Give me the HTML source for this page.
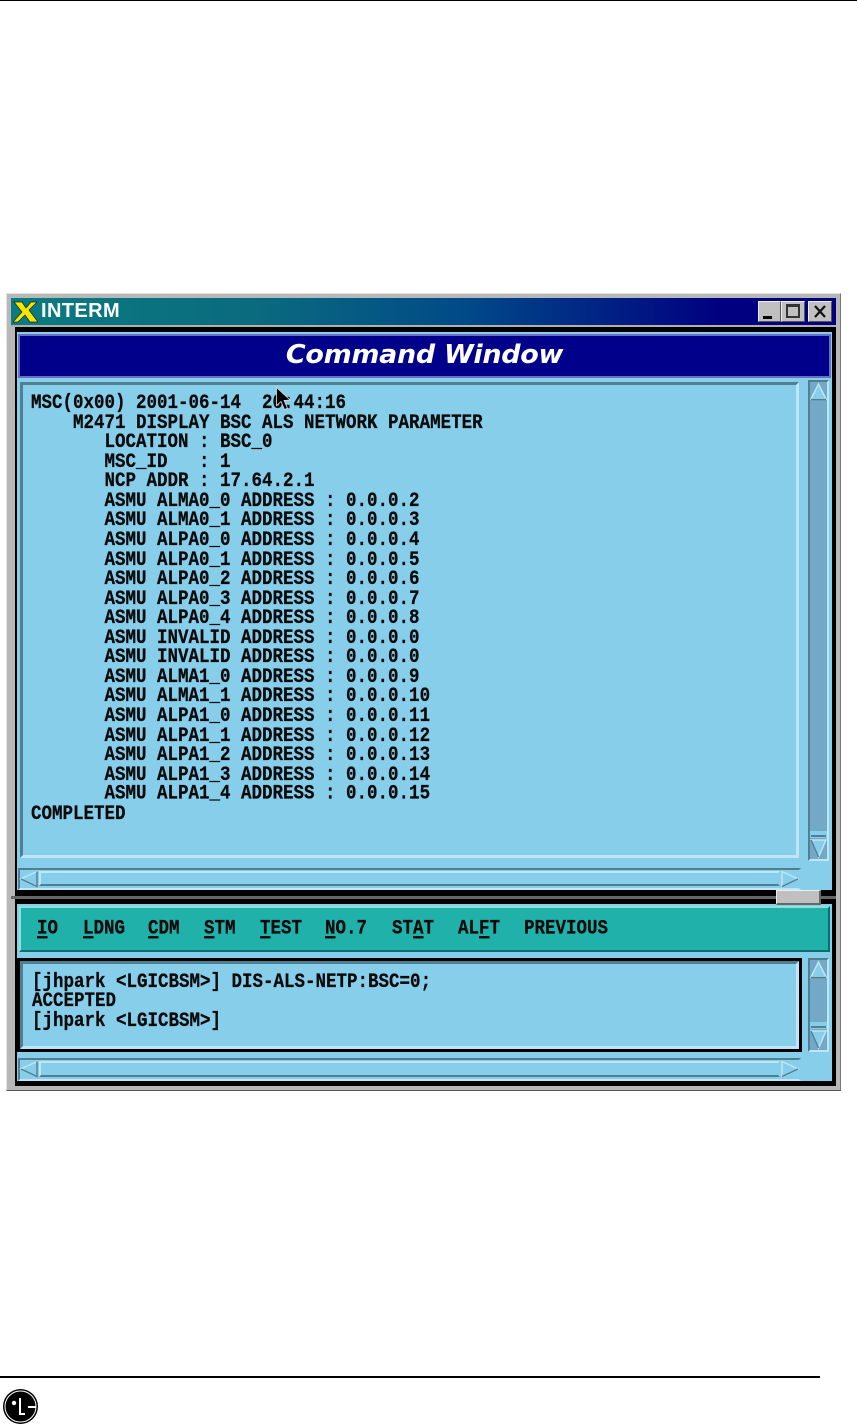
<!DOCTYPE html>
<html><head><meta charset="utf-8"><style>
html,body{margin:0;padding:0;background:#fff}
body{position:relative;width:857px;height:1425px;overflow:hidden}
div,svg,pre{position:absolute;box-sizing:border-box}
pre{margin:0;font:bold 17.5px/16.57px "Liberation Mono",monospace;color:#0a0a0a;transform:scaleY(1.18);transform-origin:0 0;white-space:pre;-webkit-text-stroke:.25px #0a0a0a}
.m{font:bold 17.5px/20px "Liberation Mono",monospace;color:#0a0a0a;position:absolute;top:919px;white-space:pre;transform:scaleY(1.18);-webkit-text-stroke:.25px #0a0a0a}
.m u{text-underline-offset:2px;text-decoration-thickness:2px}
.sk{background:#87ceeb}
.in{background:#87ceeb;border:3px solid;border-color:#4f7f90 #bfe6f6 #bfe6f6 #4f7f90}
.tr{background:#73a8c6}
</style></head><body>
<div style="left:0;top:0;width:857px;height:1px;background:#000"></div>

<!-- window -->
<div style="left:6px;top:293px;width:835px;height:798px;background:#b8b8b8;border:1px solid;border-color:#e4e4e4 #777 #555 #e4e4e4"></div>
<div style="left:11px;top:298px;width:825px;height:28px;background:linear-gradient(90deg,#0a7c80 0%,#0a6a7e 30%,#004a88 55%,#000080 86%)"></div>
<div style="left:11px;top:325px;width:825px;height:2px;background:#b0b0b0"></div>
<svg style="left:13px;top:300px" width="26" height="24" viewBox="0 0 26 24"><path d="M1 2h8l4 6 5-6h6l-8 8 9 12h-8l-5-7-7 7H0l9-10z" fill="#f5e800" stroke="#222" stroke-width=".7"/></svg>
<div style="left:41px;top:299px;font:bold 20px/24px 'Liberation Sans',sans-serif;color:#fff;letter-spacing:.4px">INTERM</div>
<!-- title buttons -->
<div style="left:758px;top:301px;width:23px;height:21px;background:#c0c0c0;border:1px solid;border-color:#eee #555 #555 #eee"></div>
<div style="left:763px;top:316px;width:9px;height:3px;background:#000"></div>
<div style="left:781px;top:301px;width:24px;height:21px;background:#c0c0c0;border:1px solid;border-color:#eee #555 #555 #eee"></div>
<div style="left:786px;top:304px;width:14px;height:14px;border:2px solid #333;border-top-width:3px"></div>
<div style="left:808px;top:301px;width:24px;height:21px;background:#c0c0c0;border:1px solid;border-color:#eee #555 #555 #eee"></div>
<svg style="left:813px;top:305px" width="14" height="13"><path d="M2 1l10 11M12 1L2 12" stroke="#111" stroke-width="2.2"/></svg>

<!-- black frame + body -->
<div style="left:15px;top:327px;width:821px;height:759px;background:#000"></div>
<div class="sk" style="left:17px;top:332px;width:815px;height:558px"></div>
<div class="sk" style="left:17px;top:904px;width:815px;height:177px"></div>

<!-- header -->
<div style="left:18px;top:334px;width:813px;height:44px;background:#00008b;border:2px solid #6a6fc4"></div>
<div style="left:18px;top:339px;width:813px;text-align:center;font:italic bold 26px/32px 'DejaVu Sans','Liberation Sans',sans-serif;color:#fff;letter-spacing:-.3px;transform:scaleX(1.037);transform-origin:407px 0">Command Window</div>

<!-- main text area -->
<div class="in" style="left:20px;top:382px;width:779px;height:476px"></div>
<pre style="left:31px;top:394px">MSC(0x00) 2001-06-14  20:44:16
    M2471 DISPLAY BSC ALS NETWORK PARAMETER
       LOCATION : BSC_0
       MSC_ID   : 1
       NCP ADDR : 17.64.2.1
       ASMU ALMA0_0 ADDRESS : 0.0.0.2
       ASMU ALMA0_1 ADDRESS : 0.0.0.3
       ASMU ALPA0_0 ADDRESS : 0.0.0.4
       ASMU ALPA0_1 ADDRESS : 0.0.0.5
       ASMU ALPA0_2 ADDRESS : 0.0.0.6
       ASMU ALPA0_3 ADDRESS : 0.0.0.7
       ASMU ALPA0_4 ADDRESS : 0.0.0.8
       ASMU INVALID ADDRESS : 0.0.0.0
       ASMU INVALID ADDRESS : 0.0.0.0
       ASMU ALMA1_0 ADDRESS : 0.0.0.9
       ASMU ALMA1_1 ADDRESS : 0.0.0.10
       ASMU ALPA1_0 ADDRESS : 0.0.0.11
       ASMU ALPA1_1 ADDRESS : 0.0.0.12
       ASMU ALPA1_2 ADDRESS : 0.0.0.13
       ASMU ALPA1_3 ADDRESS : 0.0.0.14
       ASMU ALPA1_4 ADDRESS : 0.0.0.15
COMPLETED</pre>
<svg style="left:275px;top:386px" width="16" height="26"><path d="M1.5 1.5v18l4.5-4 3.5 8 3-1.3-3.5-7.7 6-.5z" fill="#000" stroke="#ddd" stroke-width=".8"/></svg>

<!-- main vertical scrollbar -->
<div class="tr" style="left:808px;top:380px;width:21px;height:481px;border:2px solid;border-color:#4f7f90 #bfe6f6 #bfe6f6 #4f7f90"></div>
<svg style="left:808px;top:380px" width="21" height="24"><path d="M3 19L10.5 4 18 19z" fill="#87ceeb" stroke="#bfe6f6" stroke-width="1.5"/><path d="M3 19.5h15" stroke="#4f7f90" stroke-width="1.5"/></svg>
<svg style="left:808px;top:830px" width="21" height="30"><rect x="2" y="1" width="17" height="7" fill="#87ceeb"/><path d="M3 6h15" stroke="#4f7f90" stroke-width="2"/><path d="M3 10h15L10.5 27z" fill="#87ceeb" stroke="#bfe6f6" stroke-width="1.5"/><path d="M3 10L10.5 27" stroke="#4f7f90" stroke-width="1.5"/></svg>

<!-- main horizontal scrollbar -->
<div class="sk" style="left:18px;top:868px;width:783px;height:22px;border:2px solid;border-color:#4f7f90 #87ceeb #bfe6f6 #4f7f90"></div>
<div style="left:39px;top:871px;width:741px;height:15px;border:2px solid;border-color:#bfe6f6 #87ceeb #4f7f90 #bfe6f6;background:#87ceeb"></div>
<svg style="left:19px;top:870px" width="20" height="18"><path d="M18 1.5L2 9l16 7.5z" fill="#87ceeb" stroke="#bfe6f6" stroke-width="1.5"/><path d="M2 9l16 7.5V1.5" fill="none" stroke="#4f7f90" stroke-width="1.5"/></svg>
<svg style="left:780px;top:870px" width="20" height="18"><path d="M2 1.5L18 9 2 16.5z" fill="#87ceeb" stroke="#bfe6f6" stroke-width="1.5"/><path d="M18 9L2 16.500" stroke="#4f7f90" stroke-width="1.5"/></svg>

<!-- sash -->
<div style="left:15px;top:890px;width:821px;height:14px;background:#000"></div>
<div style="left:11px;top:896px;width:825px;height:3px;background:#666"></div>
<div style="left:776px;top:890px;width:45px;height:15px;background:#c0c0c0;border:1px solid;border-color:#eee #666 #666 #eee;border-width:1px 2px 2px 1px"></div>

<!-- menu -->
<div style="left:19px;top:906px;width:811px;height:46px;background:#20b2aa;border:2px solid;border-color:#8fe0d8 #0c6e6a #0c6e6a #8fe0d8"></div>
<span class="m" style="left:37px"><u>I</u>O</span>
<span class="m" style="left:83px"><u>L</u>DNG</span>
<span class="m" style="left:148px"><u>C</u>DM</span>
<span class="m" style="left:204px"><u>S</u>TM</span>
<span class="m" style="left:260px"><u>T</u>EST</span>
<span class="m" style="left:325px"><u>N</u>O.7</span>
<span class="m" style="left:392px">ST<u>A</u>T</span>
<span class="m" style="left:458px">AL<u>F</u>T</span>
<span class="m" style="left:524px">PREVIOUS</span>

<!-- command area -->
<div style="left:17px;top:958px;width:785px;height:94px;background:#000"></div>
<div class="in" style="left:20px;top:961px;width:779px;height:88px"></div>
<pre style="left:32px;top:972.5px;line-height:16.44px">[jhpark &lt;LGICBSM&gt;] DIS-ALS-NETP:BSC=0;
ACCEPTED
[jhpark &lt;LGICBSM&gt;]</pre>

<!-- lower vertical scrollbar -->
<div class="tr" style="left:808px;top:958px;width:21px;height:94px;border:2px solid;border-color:#4f7f90 #bfe6f6 #bfe6f6 #4f7f90"></div>
<svg style="left:808px;top:958px" width="21" height="24"><path d="M3 19L10.5 4 18 19z" fill="#87ceeb" stroke="#bfe6f6" stroke-width="1.5"/><path d="M3 19.5h15" stroke="#4f7f90" stroke-width="1.5"/></svg>
<svg style="left:808px;top:1021px" width="21" height="30"><rect x="2" y="1" width="17" height="7" fill="#87ceeb"/><path d="M3 6h15" stroke="#4f7f90" stroke-width="2"/><path d="M3 10h15L10.5 27z" fill="#87ceeb" stroke="#bfe6f6" stroke-width="1.5"/><path d="M3 10L10.5 27" stroke="#4f7f90" stroke-width="1.5"/></svg>

<!-- lower horizontal scrollbar -->
<div class="sk" style="left:18px;top:1058px;width:783px;height:23px;border:2px solid;border-color:#4f7f90 #87ceeb #bfe6f6 #4f7f90"></div>
<div style="left:39px;top:1061px;width:741px;height:16px;border:2px solid;border-color:#bfe6f6 #87ceeb #4f7f90 #bfe6f6;background:#87ceeb"></div>
<svg style="left:19px;top:1060px" width="20" height="18"><path d="M18 1.5L2 9l16 7.5z" fill="#87ceeb" stroke="#bfe6f6" stroke-width="1.5"/><path d="M2 9l16 7.5V1.5" fill="none" stroke="#4f7f90" stroke-width="1.5"/></svg>
<svg style="left:780px;top:1060px" width="20" height="18"><path d="M2 1.5L18 9 2 16.5z" fill="#87ceeb" stroke="#bfe6f6" stroke-width="1.5"/><path d="M18 9L2 16.5" stroke="#4f7f90" stroke-width="1.5"/></svg>

<!-- footer -->
<div style="left:0;top:1376px;width:820px;height:2px;background:#000"></div>
<svg style="left:2px;top:1387px" width="38" height="38" viewBox="0 0 38 38"><circle cx="18.5" cy="19.5" r="17.5" fill="#000"/><circle cx="18.5" cy="19.5" r="15.5" fill="#000" stroke="#fff" stroke-width="1"/><circle cx="12" cy="16" r="2.2" fill="#fff"/><path d="M18 11v16h5" fill="none" stroke="#fff" stroke-width="2"/><path d="M26 20h8" stroke="#fff" stroke-width="2"/></svg>
</body></html>
